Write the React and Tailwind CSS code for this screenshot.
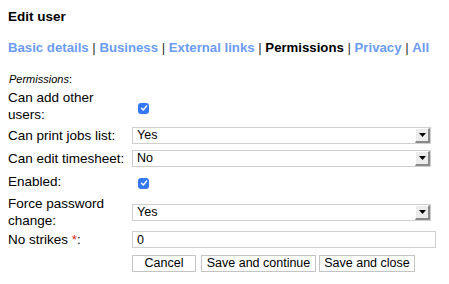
import React from 'react';

const tabs = ['Basic details', 'Business', 'External links', 'Permissions', 'Privacy', 'All'];

function Check() {
  return (
    <span className="inline-flex w-[11px] h-[11px] rounded-[3px] bg-[#3478f6] items-center justify-center">
      <svg width="8" height="8" viewBox="0 0 8 8">
        <path d="M1.5 4.2 L3.3 6 L6.6 2" stroke="white" strokeWidth="1.4" fill="none" strokeLinecap="round" strokeLinejoin="round" />
      </svg>
    </span>
  );
}

function Select({ value }) {
  return (
    <div className="flex items-center w-[299px] h-[17px] border border-[#cfcfcf] bg-white">
      <span className="flex-1 pl-[4px] text-[12.5px] leading-[15px] text-black">{value}</span>
      <span className="flex items-center justify-center w-[15px] h-[15px] bg-[#ececec] border-r-2 border-b-2 border-[#8a8a8a] border-t border-l border-t-white border-l-white">
        <svg width="7" height="4" viewBox="0 0 7 4"><path d="M0 0 H7 L3.5 4 Z" fill="black" /></svg>
      </span>
    </div>
  );
}

function Row({ label, children, className = '', narrow = false }) {
  return (
    <div className={`grid grid-cols-[124px_1fr] items-center ${className}`}>
      <div className={`text-[13.5px] leading-[17px] text-black ${narrow ? 'max-w-[100px]' : 'whitespace-nowrap'}`}>{label}</div>
      <div className="flex">{children}</div>
    </div>
  );
}

export default function App() {
  return (
    <div className="w-[449px] h-[284px] bg-white px-[8px] pt-[9px] font-['Liberation_Sans',Arial,sans-serif] text-black">
      <h1 className="text-[13.5px] leading-[15px] font-bold">Edit user</h1>
      <div className="mt-[16px] text-[13.2px] leading-[16px] font-bold whitespace-nowrap">
        {tabs.map((t, i) => (
          <span key={t}>
            {i > 0 && <span className="font-normal text-[#333]"> | </span>}
            <span className={t === 'Permissions' ? 'text-black' : 'text-[#6b9cf5]'}>{t}</span>
          </span>
        ))}
      </div>
      <div className="mt-[17px] pl-[1px] text-[11px] leading-[13px]"><i>Permissions</i>:</div>
      <div className="flex flex-col mt-[3px]">
        <Row label="Can add other users:" narrow>
          <div className="pl-[6px] pt-[2px]"><Check /></div>
        </Row>
        <Row label="Can print jobs list:" className="mt-[4px]">
          <Select value="Yes" />
        </Row>
        <Row label="Can edit timesheet:" className="mt-[6px]">
          <Select value="No" />
        </Row>
        <Row label="Enabled:" className="mt-[1px]">
          <div className="pl-[6px] pt-[2px]"><Check /></div>
        </Row>
        <Row label="Force password change:" className="mt-[1px]" narrow>
          <Select value="Yes" />
        </Row>
        <Row label={<>No strikes <span className="text-[#e02020]">*</span>:</>} className="mt-[2px]">
          <input
            defaultValue="0"
            className="block w-[304px] h-[17px] border border-[#cfcfcf] px-[4px] text-[12.5px] leading-[15px] outline-none"
          />
        </Row>
        <div className="flex pl-[124px] mt-[7px]">
          <button className="w-[64px] h-[17px] border border-[#c4c4c4] bg-white text-[12.5px] leading-[15px]">Cancel</button>
          <button className="ml-[5px] w-[115px] h-[17px] border border-[#c4c4c4] bg-white text-[12.5px] leading-[15px]">Save and continue</button>
          <button className="ml-[3px] w-[96px] h-[17px] border border-[#c4c4c4] bg-white text-[12.5px] leading-[15px]">Save and close</button>
        </div>
      </div>
    </div>
  );
}
